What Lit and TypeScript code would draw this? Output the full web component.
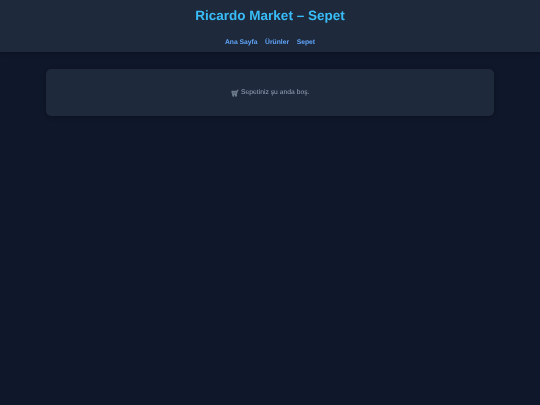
import { LitElement, html, css } from 'lit';
import { customElement } from 'lit/decorators.js';

@customElement('app-root')
export class AppRoot extends LitElement {
  static styles = css`
    :host {
      display: block;
      min-height: 405px;
      background: #0f172a;
      font-family: 'Liberation Sans', Arial, sans-serif;
      text-rendering: geometricPrecision;
    }
    header {
      height: 52px;
      box-sizing: border-box;
      padding-top: 8px;
      background: #1e293b;
      text-align: center;
      box-shadow: 0 1px 4px rgba(0, 0, 0, 0.3);
    }
    h1 {
      margin: 0;
      font-size: 13.5px;
      line-height: 16px;
      font-weight: 700;
      color: #38bdf8;
      filter: blur(0.4px);
    }
    nav {
      display: flex;
      justify-content: center;
      gap: 7.5px;
      margin-top: 15px;
      filter: blur(0.4px);
    }
    nav a {
      font-size: 6.75px;
      line-height: 8px;
      font-weight: 700;
      color: #60a5fa;
      text-decoration: none;
    }
    main {
      padding: 17px 46px 0;
    }
    .card {
      height: 47px;
      display: flex;
      align-items: center;
      justify-content: center;
      gap: 2.5px;
      background: #1e293b;
      border-radius: 5px;
      box-shadow: 0 1px 4px rgba(0, 0, 0, 0.3);
      font-size: 6.75px;
      line-height: 8px;
      color: #94a3b8;
    }
    .card span {
      filter: blur(0.4px);
    }
    svg {
      width: 8px;
      height: 8px;
      filter: blur(0.4px);
    }
  `;

  render() {
    return html`
      <header>
        <h1>Ricardo Market – Sepet</h1>
        <nav>
          <a href="#">Ana Sayfa</a>
          <a href="#">Ürünler</a>
          <a href="#">Sepet</a>
        </nav>
      </header>
      <main>
        <div class="card">
          <svg viewBox="0 0 16 16" fill="none" stroke="#8d9aa8" stroke-width="1.3">
            <path d="M15 2h-2l-2 9H3L1.500 4.500H12.500" fill="#5b6b7d" />
            <circle cx="4.500" cy="13.500" r="1.200" fill="#8d9aa8" />
            <circle cx="10" cy="13.500" r="1.200" fill="#8d9aa8" />
          </svg>
          <span>Sepetiniz şu anda boş.</span>
        </div>
      </main>
    `;
  }
}
